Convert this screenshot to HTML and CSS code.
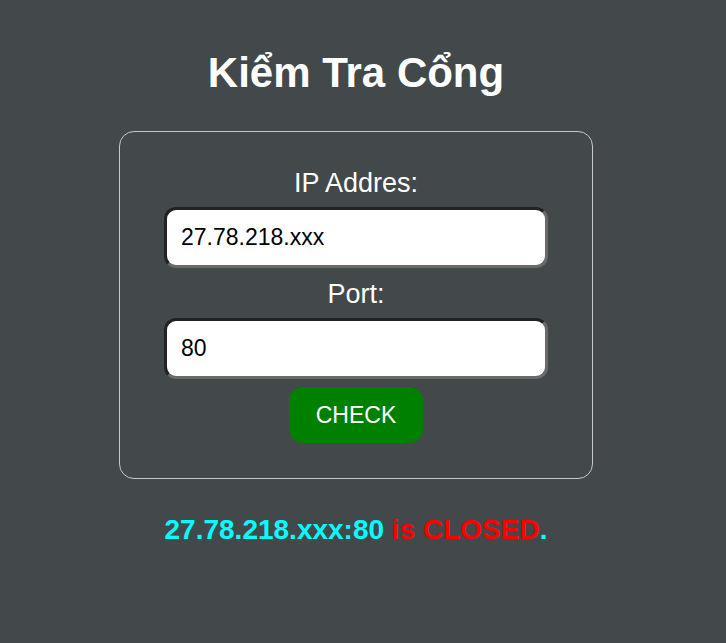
FILE: index.html
```html
<!DOCTYPE html>
<html lang="vi">
<head>
<meta charset="utf-8">
<title>Kiểm Tra Cổng</title>
<link rel="stylesheet" href="styles.css">
</head>
<body>
<main class="page">
  <h1 class="title">Kiểm Tra Cổng</h1>
  <form class="card">
    <label class="label" for="ip">IP Addres:</label>
    <input class="field" id="ip" type="text" value="27.78.218.xxx">
    <label class="label" for="port">Port:</label>
    <input class="field" id="port" type="text" value="80">
    <button class="btn" type="button">CHECK</button>
  </form>
  <p class="result"><span class="ok">27.78.218.xxx:80</span><span class="bad"> is CLOSED</span><span class="ok">.</span></p>
</main>
</body>
</html>
```

FILE: styles.css
```css
html, body {
  margin: 0;
  padding: 0;
  background: #43484b;
}
body {
  font-family: "Liberation Sans", Arial, sans-serif;
  color: #fff;
  min-height: 643px;
}
.page {
  display: flex;
  flex-direction: column;
  align-items: center;
  padding: 48px 14px 0 0;
}
.title {
  margin: 0;
  font-size: 42px;
  font-weight: bold;
  line-height: 50px;
}
.card {
  margin-top: 33px;
  width: 474px;
  box-sizing: border-box;
  border: 1px solid #c8c8c8;
  border-radius: 15px;
  display: flex;
  flex-direction: column;
  align-items: center;
  padding: 34px 0 35px;
}
.label {
  font-size: 27px;
  line-height: 27px;
  padding-top: 4px;
}
.field {
  box-sizing: border-box;
  width: 384px;
  height: 61px;
  margin: 10px 0 9px;
  border: 3px solid;
  border-color: #222 #6a6a6a #6a6a6a #222;
  border-radius: 12px;
  background: #fff;
  color: #000;
  font-family: "Liberation Sans", Arial, sans-serif;
  font-size: 23px;
  padding: 0 14px;
  outline: none;
}
.btn {
  margin-top: -1px;
  width: 134px;
  height: 56px;
  border: none;
  border-radius: 14px;
  background: #008000;
  color: #fff;
  font-family: "Liberation Sans", Arial, sans-serif;
  font-size: 23px;
  padding: 0;
}
.result {
  margin: 35px 0 0;
  font-size: 28px;
  font-weight: bold;
  line-height: 32px;
}
.ok { color: #00ffff; }
.bad { color: #ff0000; }
```
